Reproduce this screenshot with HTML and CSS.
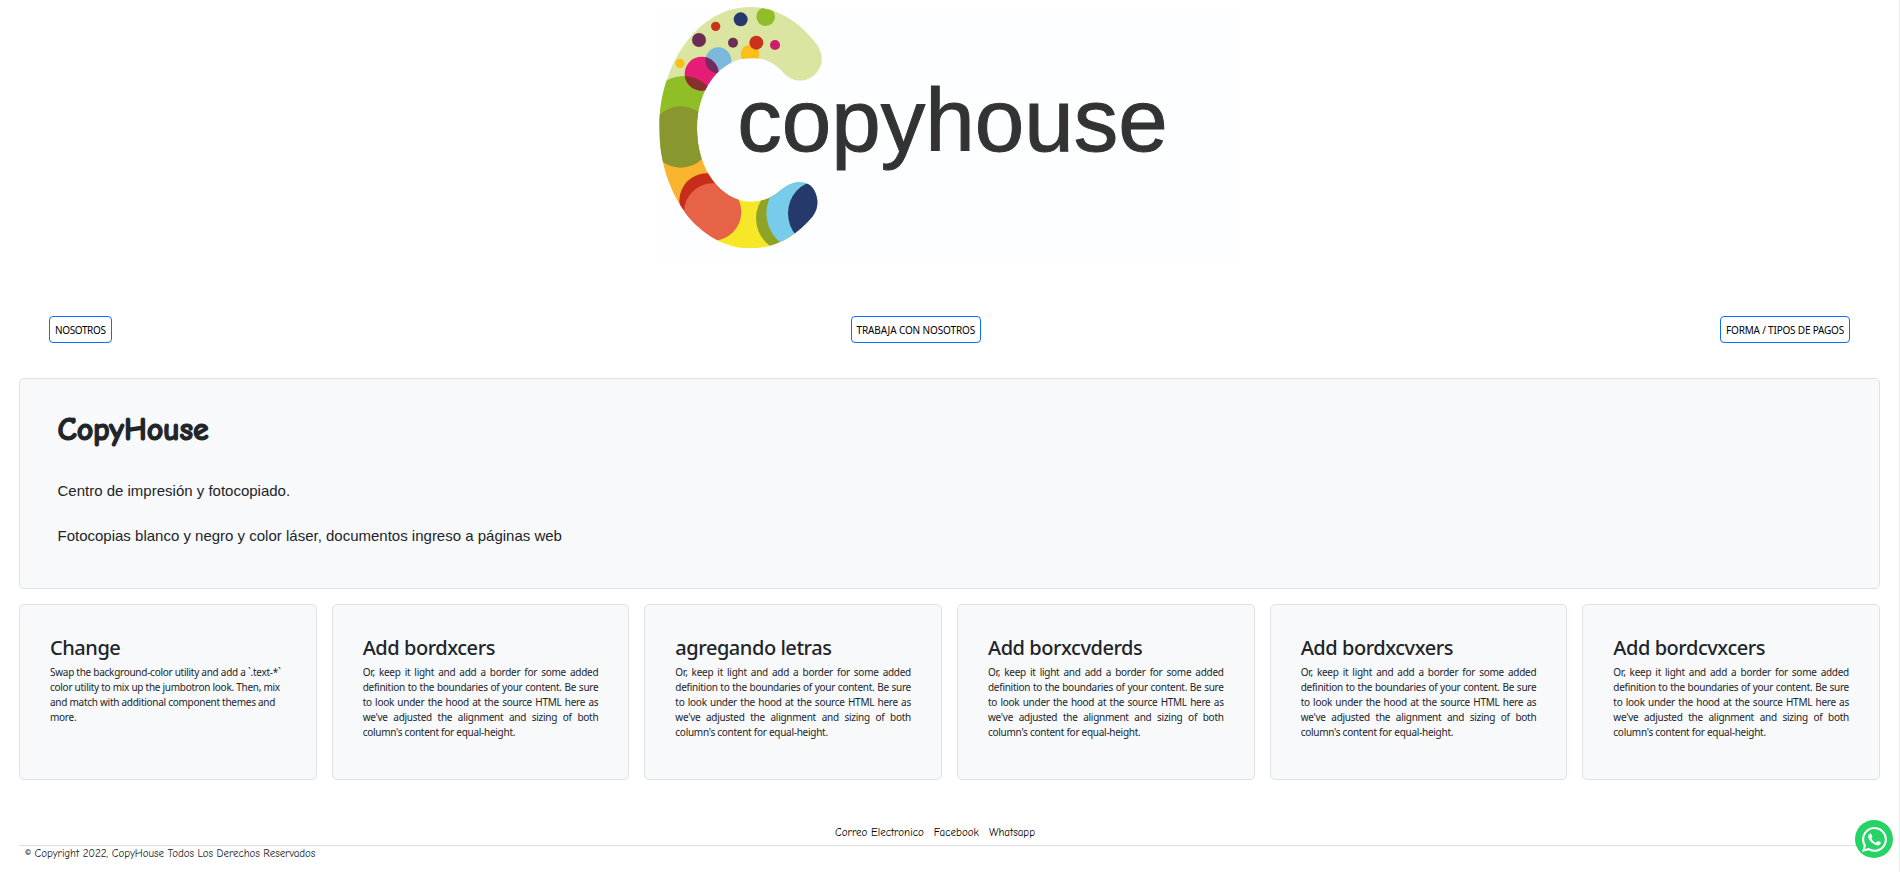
FILE: index.html
```html
<!DOCTYPE html>
<html lang="es">
<head>
<meta charset="utf-8">
<title>CopyHouse</title>
<link rel="stylesheet" href="styles.css">
</head>
<body>
<header class="brand">
  <svg class="logo" viewBox="60 21 1740 762" role="img" aria-label="copyhouse">
    <defs>
      <clipPath id="ring"><path d="M330 21C180 21 58 185 58 385C58 585 180 745 330 745C405 745 465 710 517 650C535 628 536 600 525 575C510 543 470 535 430 565C400 590 375 605 332 605C243 605 171 508 171 385C171 265 243 175 332 175C375 173 405 190 430 218C465 255 510 245 532 215C550 190 550 165 532 135C480 65 410 21 330 21Z"/></clipPath>
      <clipPath id="pink"><circle cx="185" cy="221" r="51"/></clipPath>
    </defs>
    <g clip-path="url(#ring)">
      <rect x="50" y="10" width="520" height="390" fill="#dbe5a2"/>
      <rect x="50" y="400" width="190" height="260" fill="#f9b430"/>
      <rect x="218" y="500" width="330" height="260" fill="#f6e826"/>
      <circle cx="130" cy="328" r="100" fill="#90be26"/>
      <circle cx="122" cy="411" r="92" fill="#8a962e"/>
      <circle cx="200" cy="602" r="82" fill="#c72d1b"/>
      <circle cx="218" cy="636" r="86" fill="#e66348"/>
      <circle cx="451" cy="655" r="103" fill="#8fa327"/>
      <circle cx="490" cy="640" r="111" fill="#77ccec"/>
      <ellipse cx="530" cy="640" rx="86" ry="95" fill="#26396b"/>
      <circle cx="302" cy="58" r="21" fill="#26396b"/>
      <circle cx="377" cy="50" r="28" fill="#90be26"/>
      <circle cx="227" cy="79" r="14" fill="#c9331b"/>
      <circle cx="177" cy="120" r="21" fill="#6c2c55"/>
      <circle cx="279" cy="128" r="15" fill="#6c2c55"/>
      <circle cx="330" cy="162" r="28" fill="#fcbe18"/>
      <circle cx="349" cy="128" r="21" fill="#c9331b"/>
      <circle cx="405" cy="135" r="15" fill="#cf1b6b"/>
      <circle cx="120" cy="190" r="14" fill="#fcbe18"/>
      <circle cx="235" cy="181" r="39" fill="#7cb8dc"/>
      <circle cx="185" cy="221" r="51" fill="#e51d76"/>
      <g clip-path="url(#pink)">
        <circle cx="235" cy="181" r="39" fill="#732a5f"/>
        <circle cx="130" cy="328" r="100" fill="#87302c"/>
      </g>
    </g>
    <text class="logo-text" x="292" y="453">copyhouse</text>
  </svg>
</header>

<nav class="nav">
  <a class="btn btn-about">NOSOTROS</a>
  <a class="btn">TRABAJA CON NOSOTROS</a>
  <a class="btn btn-pay">FORMA / TIPOS DE PAGOS</a>
</nav>

<main class="content">
  <section class="panel hero">
    <h1>CopyHouse</h1>
    <p>Centro de impresión y fotocopiado.</p>
    <p>Fotocopias blanco y negro y color láser, documentos ingreso a páginas web</p>
  </section>
  <section class="cards">
    <article class="panel card">
      <h2>Change</h2>
      <p class="left">Swap the background-color utility and add a <span class="code">`.text-*`</span> color utility to mix up the jumbotron look. Then, mix and match with additional component themes and more.</p>
    </article>
    <article class="panel card">
      <h2>Add bordxcers</h2>
      <p>Or, keep it light and add a border for some added definition to the boundaries of your content. Be sure to look under the hood at the source HTML here as we've adjusted the alignment and sizing of both column's content for equal-height.</p>
    </article>
    <article class="panel card">
      <h2>agregando letras</h2>
      <p>Or, keep it light and add a border for some added definition to the boundaries of your content. Be sure to look under the hood at the source HTML here as we've adjusted the alignment and sizing of both column's content for equal-height.</p>
    </article>
    <article class="panel card">
      <h2>Add borxcvderds</h2>
      <p>Or, keep it light and add a border for some added definition to the boundaries of your content. Be sure to look under the hood at the source HTML here as we've adjusted the alignment and sizing of both column's content for equal-height.</p>
    </article>
    <article class="panel card">
      <h2>Add bordxcvxers</h2>
      <p>Or, keep it light and add a border for some added definition to the boundaries of your content. Be sure to look under the hood at the source HTML here as we've adjusted the alignment and sizing of both column's content for equal-height.</p>
    </article>
    <article class="panel card">
      <h2>Add bordcvxcers</h2>
      <p>Or, keep it light and add a border for some added definition to the boundaries of your content. Be sure to look under the hood at the source HTML here as we've adjusted the alignment and sizing of both column's content for equal-height.</p>
    </article>
  </section>
</main>

<footer class="footer">
  <div class="links"><a>Correo Electronico</a><a>Facebook</a><a>Whatsapp</a></div>
  <p class="copy">© Copyright 2022, CopyHouse Todos Los Derechos Reservados</p>
</footer>

<a class="whatsapp" aria-label="Whatsapp">
  <svg viewBox="0 0 16 16" width="25" height="25" fill="#fff"><path d="M13.601 2.326A7.854 7.854 0 0 0 7.994 0C3.627 0 .068 3.558.064 7.926c0 1.399.366 2.76 1.057 3.965L0 16l4.204-1.102a7.933 7.933 0 0 0 3.79.965h.004c4.368 0 7.926-3.558 7.93-7.93A7.898 7.898 0 0 0 13.6 2.326zM7.994 14.521a6.573 6.573 0 0 1-3.356-.92l-.24-.144-2.494.654.666-2.433-.156-.251a6.56 6.56 0 0 1-1.007-3.505c0-3.626 2.957-6.584 6.591-6.584a6.56 6.56 0 0 1 4.66 1.931 6.557 6.557 0 0 1 1.928 4.66c-.004 3.639-2.961 6.592-6.592 6.592zm3.615-4.934c-.197-.099-1.17-.578-1.353-.646-.182-.065-.315-.099-.445.099-.133.197-.513.646-.627.775-.114.133-.232.148-.43.05-.197-.1-.836-.308-1.592-.985-.59-.525-.985-1.175-1.103-1.372-.114-.198-.011-.304.088-.403.087-.088.197-.232.296-.346.1-.114.133-.198.198-.33.065-.134.034-.248-.015-.347-.05-.099-.445-1.076-.612-1.47-.16-.389-.323-.335-.445-.34-.114-.007-.247-.007-.38-.007a.729.729 0 0 0-.529.247c-.182.198-.691.677-.691 1.654 0 .977.71 1.916.81 2.049.098.133 1.394 2.132 3.383 2.992.47.205.84.326 1.129.418.475.152.904.129 1.246.08.38-.058 1.171-.48 1.338-.943.164-.464.164-.86.114-.943-.049-.084-.182-.133-.38-.232z"/></svg>
</a>
</body>
</html>
```
FILE: styles.css
```css
* { box-sizing: border-box; }

body {
  margin: 0;
  height: 872px;
  overflow: hidden;
  display: flex;
  flex-direction: column;
  background: #fff;
  border-right: 1px solid #ececec;
  color: #212529;
  font-family: "Segoe UI", "Noto Sans", sans-serif;
  font-size: 10px;
  line-height: 15px;
}

h1, h2, p { margin: 0; }

.brand {
  display: flex;
  justify-content: center;
  padding: 7px 0 0 1px;
}

.logo {
  display: block;
  width: 580px;
  height: 254px;
  overflow: visible;
  background: #fdfeff;
}

.logo-text {
  font: 267px "Liberation Sans", Arial, sans-serif;
  fill: #333;
  stroke: #333;
  stroke-width: 3;
}

.nav {
  display: flex;
  justify-content: space-between;
  padding: 55px 49px 0;
}

.btn {
  height: 27px;
  padding: 6px 5px 0;
  border: 1px solid #0d6efd;
  border-radius: 4px;
  color: #000;
  letter-spacing: -0.12px;
  white-space: nowrap;
}

.btn-about { letter-spacing: -0.37px; }
.btn-pay { letter-spacing: -0.2px; }

.content { padding: 35px 19px 0; }

.panel {
  background: #f8f9fb;
  border: 1px solid #dee2e6;
  border-radius: 5px;
}

.hero {
  height: 211px;
  padding: 31px 37.5px 0;
}

.hero h1 {
  font: 700 32px/40px "Comic Sans MS", "Comic Neue", "Noto Sans", sans-serif;
  letter-spacing: -0.1px;
  -webkit-text-stroke: 1.2px #212529;
  margin-bottom: 30px;
}

.hero p {
  font: 15px/22px "Liberation Sans", Arial, sans-serif;
  margin-bottom: 23px;
}

.cards {
  display: grid;
  grid-template-columns: repeat(6, 1fr);
  gap: 15px;
  margin-top: 15px;
}

.card {
  height: 176px;
  padding: 31px 30px 0;
}

.card h2 {
  font-size: 20px;
  line-height: 24px;
  font-weight: 500;
  letter-spacing: -0.45px;
  margin-bottom: 5px;
  white-space: nowrap;
}

.card p {
  text-align: justify;
  letter-spacing: -0.27px;
}

.card .left { text-align: left; }
.code { white-space: nowrap; }

.footer {
  padding: 45px 19px 0;
  font-family: "Comic Sans MS", "Comic Neue", "Noto Sans", sans-serif;
  font-size: 11px;
}

.links {
  display: flex;
  gap: 10px;
  height: 21px;
  padding-left: 816px;
  border-bottom: 1px solid #dee2e6;
  color: #000;
}

.copy {
  padding-left: 6px;
  letter-spacing: -0.06px;
}

.whatsapp {
  position: absolute;
  right: 7px;
  top: 820px;
  width: 38px;
  height: 38px;
  display: flex;
  align-items: center;
  justify-content: center;
  border-radius: 50%;
  background: #25d366;
}
```
